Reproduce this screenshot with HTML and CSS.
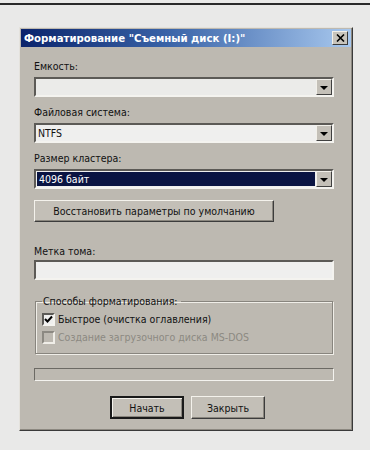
FILE: index.html
```html
<!DOCTYPE html>
<html lang="ru">
<head>
<meta charset="UTF-8">
<title>Форматирование</title>
<link rel="stylesheet" href="styles.css">
</head>
<body>
<div class="page">
    <div class="dialog">
        <div class="titlebar">
            <span class="title">Форматирование "Съемный диск (I:)"</span>
            <span class="close">
                <svg width="9" height="8" viewBox="0 0 9 8"><path d="M1 0.5 L8 7.5 M8 0.5 L1 7.5" stroke="#000" stroke-width="1.6"/></svg>
            </span>
        </div>
        <div class="content">
            <div class="label first">Емкость:</div>
            <div class="combo disabled">
                <span class="value"></span>
                <span class="arrow"><i></i></span>
            </div>

            <div class="label">Файловая система:</div>
            <div class="combo">
                <span class="value">NTFS</span>
                <span class="arrow"><i></i></span>
            </div>

            <div class="label">Размер кластера:</div>
            <div class="combo selected">
                <span class="value">4096 байт</span>
                <span class="arrow"><i></i></span>
            </div>

            <button class="btn restore">Восстановить параметры по умолчанию</button>

            <div class="label volume">Метка тома:</div>
            <div class="textbox"></div>

            <fieldset class="group">
                <legend>Способы форматирования:</legend>
                <div class="check">
                    <span class="box">
                        <svg width="9" height="9" viewBox="0 0 9 9"><path d="M1 4 L3.5 6.5 L8 1.5" stroke="#000" stroke-width="2" fill="none"/></svg>
                    </span>
                    <span>Быстрое (очистка оглавления)</span>
                </div>
                <div class="check off">
                    <span class="box"></span>
                    <span>Создание загрузочного диска MS-DOS</span>
                </div>
            </fieldset>

            <div class="progress"></div>

            <div class="actions">
                <button class="btn default">Начать</button>
                <button class="btn">Закрыть</button>
            </div>
        </div>
    </div>
</div>
</body>
</html>
```

FILE: styles.css
```css
body {
    margin: 0;
    background: #e9e9e8;
    font-family: "DejaVu Sans Condensed", "DejaVu Sans", sans-serif;
    font-size: 10.5px;
    color: #111;
}
.page {
    border-top: 2px solid #2a2a2a;
    margin-top: 3px;
    height: 445px;
    padding-top: 22px;
    box-sizing: border-box;
}
.dialog {
    margin-left: 19px;
    width: 334px;
    height: 404px;
    box-sizing: border-box;
    background: #bdb9b1;
    border: 1px solid;
    border-color: #e4e2dc #3a3a3a #3a3a3a #e4e2dc;
    padding: 1px;
    box-shadow: inset -1px -1px 0 #8c8880;
}
.titlebar {
    height: 18px;
    display: flex;
    align-items: center;
    justify-content: space-between;
    padding: 0 3px 0 3px;
    background: linear-gradient(to right, #0b246c, #3a64a8 45%, #a8c8ee);
}
.title {
    color: #fff;
    font-weight: bold;
    font-size: 11.3px;
}
.close {
    width: 16px;
    height: 14px;
    box-sizing: border-box;
    background: #c8c4bc;
    border: 1px solid;
    border-color: #f2f0ea #3a3a3a #3a3a3a #f2f0ea;
    display: flex;
    align-items: center;
    justify-content: center;
}
.content {
    padding: 0 17px 0 13px;
}
.label {
    margin-top: 8px;
    height: 14px;
    line-height: 14px;
}
.label.first {
    margin-top: 12px;
    margin-bottom: 3px;
}
.combo {
    margin-top: 4px;
    height: 20px;
    box-sizing: border-box;
    display: flex;
    background: #efefee;
    border: 2px solid;
    border-color: #5c5a56 #f4f3ef #f4f3ef #5c5a56;
}
.combo .value {
    flex: 1;
    padding-left: 2px;
    line-height: 16px;
}
.combo.selected .value {
    background: #0a1442;
    color: #fff;
    margin: 1px 1px 1px 1px;
    line-height: 14px;
}
.combo.disabled {
    background: #ebebe9;
}
.arrow {
    width: 16px;
    height: 16px;
    box-sizing: border-box;
    background: #c4c0b8;
    border: 1px solid;
    border-color: #f2f0ea #404040 #404040 #f2f0ea;
    display: flex;
    align-items: center;
    justify-content: center;
}
.arrow i {
    width: 0;
    height: 0;
    border-left: 4px solid transparent;
    border-right: 4px solid transparent;
    border-top: 4px solid #000;
    margin-top: 1px;
}
.btn {
    font-family: "DejaVu Sans Condensed", "DejaVu Sans", sans-serif;
    font-size: 10.5px;
    color: #111;
    background: #c3bfb7;
    border: 1px solid;
    border-color: #f4f2ec #3c3c3c #3c3c3c #f4f2ec;
    box-shadow: inset -1px -1px 0 #8a867e;
    padding: 0;
    margin: 0;
}
.restore {
    display: block;
    margin-top: 11px;
    width: 240px;
    height: 22px;
}
.label.volume {
    margin-top: 22px;
}
.textbox {
    margin-top: 2px;
    height: 20px;
    box-sizing: border-box;
    background: #efefee;
    border: 2px solid;
    border-color: #5c5a56 #f4f3ef #f4f3ef #5c5a56;
}
.group {
    margin: 14px 1px 0 1px;
    padding: 2px 6px 3px 6px;
    height: 60px;
    box-sizing: border-box;
    border: 1px solid #88857e;
    box-shadow: 1px 1px 0 #f0eee8, inset 1px 1px 0 #f0eee8;
}
.group legend {
    padding: 0 3px 0 1px;
    margin-left: 0;
    line-height: 14px;
}
.check {
    display: flex;
    align-items: center;
    gap: 3px;
    height: 18px;
}
.box {
    width: 13px;
    height: 13px;
    box-sizing: border-box;
    background: #efefee;
    border: 2px solid;
    border-color: #5c5a56 #f4f3ef #f4f3ef #5c5a56;
    display: flex;
    align-items: center;
    justify-content: center;
}
.check.off {
    color: #8c8982;
}
.check.off .box {
    background: #bdb9b1;
    border-color: #8c8982 #f0eee8 #f0eee8 #8c8982;
}
.progress {
    margin-top: 14px;
    height: 13px;
    box-sizing: border-box;
    border: 1px solid;
    border-color: #6c6a64 #f4f3ef #f4f3ef #6c6a64;
}
.actions {
    margin-top: 15px;
    display: flex;
    justify-content: center;
    gap: 7px;
    padding-left: 7px;
}
.actions .btn {
    width: 74px;
    height: 23px;
}
.btn.default {
    border: 2px solid #1a1a1a;
    box-shadow: inset 1px 1px 0 #f4f2ec, inset -1px -1px 0 #8a867e;
}
```
